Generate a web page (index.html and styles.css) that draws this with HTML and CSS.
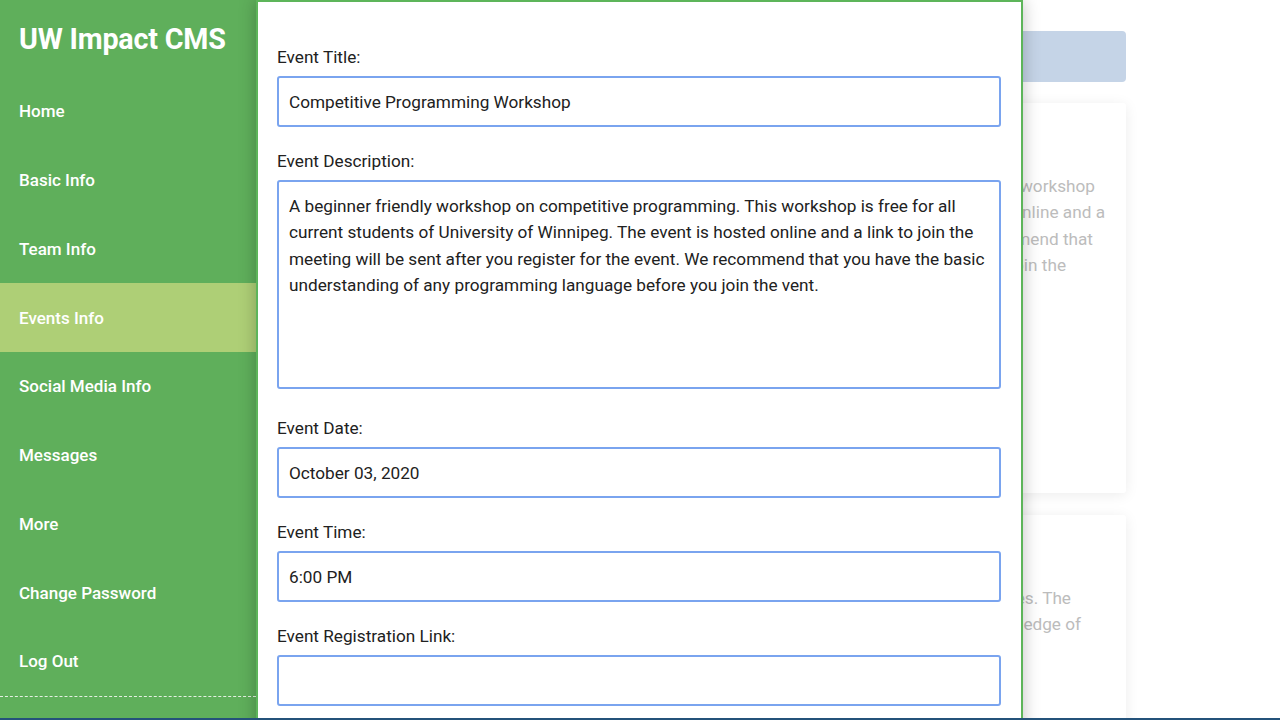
FILE: index.html
```html
<!DOCTYPE html>
<html lang="en">
<head>
<meta charset="utf-8">
<title>UW Impact CMS - Events Info</title>
<link rel="stylesheet" href="styles.css">
</head>
<body>
<div class="app">
  <aside class="sidebar">
    <div class="brand">UW Impact CMS</div>
    <nav class="nav">
      <a class="nav-item">Home</a>
      <a class="nav-item">Basic Info</a>
      <a class="nav-item">Team Info</a>
      <a class="nav-item active">Events Info</a>
      <a class="nav-item">Social Media Info</a>
      <a class="nav-item">Messages</a>
      <a class="nav-item">More</a>
      <a class="nav-item">Change Password</a>
      <a class="nav-item">Log Out</a>
    </nav>
  </aside>
  <main class="main">
    <div class="topbar"></div>
    <div class="content">
      <div class="banner"></div>
      <div class="card card-first">
        <div class="card-title">Competitive Programming Workshop</div>
        <div class="card-text">
          <div class="ln ln-1">A beginner friendly workshop</div>
          <div class="ln ln-2">The event is hosted online and a</div>
          <div class="ln ln-3">We recommend that</div>
          <div class="ln ln-4">before you join the</div>
          <div class="ln ln-5">vent.</div>
        </div>
      </div>
      <div class="card card-second">
        <div class="card-title">Web Development Workshop</div>
        <div class="card-text">
          <div class="ln ln-6">to build websites. The</div>
          <div class="ln ln-7">basic knowledge of</div>
        </div>
      </div>
    </div>
  </main>
</div>

<div class="modal">
  <form class="form">
    <div class="group">
      <label class="label">Event Title:</label>
      <input class="field" type="text" value="Competitive Programming Workshop">
    </div>
    <div class="group">
      <label class="label">Event Description:</label>
      <textarea class="field area">A beginner friendly workshop on competitive programming. This workshop is free for all current students of University of Winnipeg. The event is hosted online and a link to join the meeting will be sent after you register for the event. We recommend that you have the basic understanding of any programming language before you join the vent.</textarea>
    </div>
    <div class="group">
      <label class="label">Event Date:</label>
      <input class="field" type="text" value="October 03, 2020">
    </div>
    <div class="group">
      <label class="label">Event Time:</label>
      <input class="field" type="text" value="6:00 PM">
    </div>
    <div class="group">
      <label class="label">Event Registration Link:</label>
      <input class="field" type="text" value="">
    </div>
  </form>
</div>

<div class="frame-bottom"></div>
</body>
</html>
```

FILE: styles.css
```css
* { box-sizing: border-box; }

html, body {
  margin: 0;
  padding: 0;
  width: 1280px;
  height: 720px;
  overflow: hidden;
  background: #ffffff;
  font-family: Roboto, "Liberation Sans", Arial, sans-serif;
}

.app {
  display: flex;
  height: 720px;
}

/* Sidebar */
.sidebar {
  width: 256px;
  flex: 0 0 256px;
  background: #5faf5b;
  color: #ffffff;
  display: flex;
  flex-direction: column;
}

.brand {
  height: 77px;
  display: flex;
  align-items: center;
  padding-left: 19px;
  font-size: 28.7px;
  font-weight: 700;
  letter-spacing: -0.2px;
  padding-top: 1px;
}

.nav {
  display: flex;
  flex-direction: column;
  border-bottom: 1px dashed #e4f0e2;
}

.nav-item {
  height: 68.75px;
  display: flex;
  align-items: center;
  padding-left: 19px;
  font-size: 17px;
  font-weight: 500;
  color: #ffffff;
}

.nav-item.active {
  background: #aecf76;
}

/* Main (behind the modal) */
.main {
  flex: 1;
  display: flex;
  flex-direction: column;
}

.topbar {
  height: 10px;
  background: #5cb05c;
  box-shadow: 0 1px 3px rgba(0, 0, 0, 0.12);
}

.content {
  padding: 21px 154px 0 154px;
  display: flex;
  flex-direction: column;
}

.banner {
  height: 51px;
  background: #c5d4e7;
  border-radius: 4px;
  margin-top: 10px;
  margin-bottom: 21px;
}

.card {
  background: #ffffff;
  border-radius: 3px;
  box-shadow: 0 2px 14px rgba(0, 0, 0, 0.08);
  padding: 30px 20px 20px 20px;
  overflow: hidden;
  margin-bottom: 22px;
  flex: 0 0 auto;
}

.card-first { height: 390px; }
.card-second { height: 260px; }

.card-title {
  font-size: 20px;
  line-height: 26px;
  color: #bdbdbd;
  margin-bottom: 14px;
}

.card-text {
  font-size: 17.2px;
  line-height: 26.4px;
  color: #bcbcbc;
}

.ln {
  white-space: nowrap;
  text-align: right;
}

.ln-1 { padding-right: 11px; }
.ln-2 { padding-right: 1px; }
.ln-3 { padding-right: 13px; }
.ln-4 { padding-right: 40px; }
.ln-5 { text-align: left; }
.ln-6 { padding-right: 35px; }
.ln-7 { padding-right: 25px; }

/* Modal */
.modal {
  position: absolute;
  left: 256px;
  top: 0;
  width: 767px;
  height: 740px;
  background: #ffffff;
  border: 2px solid #5db55a;
  border-bottom: none;
  padding: 45px 20px 0 19px;
  box-shadow: 0 0 16px rgba(0, 0, 0, 0.25);
}

.form {
  display: flex;
  flex-direction: column;
}

.group {
  margin-bottom: 24px;
}

.label {
  display: block;
  font-size: 17.2px;
  line-height: 20px;
  margin-bottom: 9px;
  color: #212121;
}

.field {
  display: block;
  width: 100%;
  height: 51px;
  margin: 0;
  border: 2px solid #7aa4ef;
  border-radius: 3px;
  padding: 0 10px;
  font-family: Roboto, "Liberation Sans", Arial, sans-serif;
  font-size: 17.2px;
  color: #212121;
  background: #ffffff;
  outline: none;
}

.area {
  height: 209px;
  padding: 11px 10px 10px 10px;
  line-height: 26.4px;
  resize: none;
  margin-bottom: 5px;
  overflow: hidden;
}

.frame-bottom {
  position: fixed;
  left: 0;
  right: 0;
  bottom: 0;
  height: 2px;
  background: #24527a;
}
```
